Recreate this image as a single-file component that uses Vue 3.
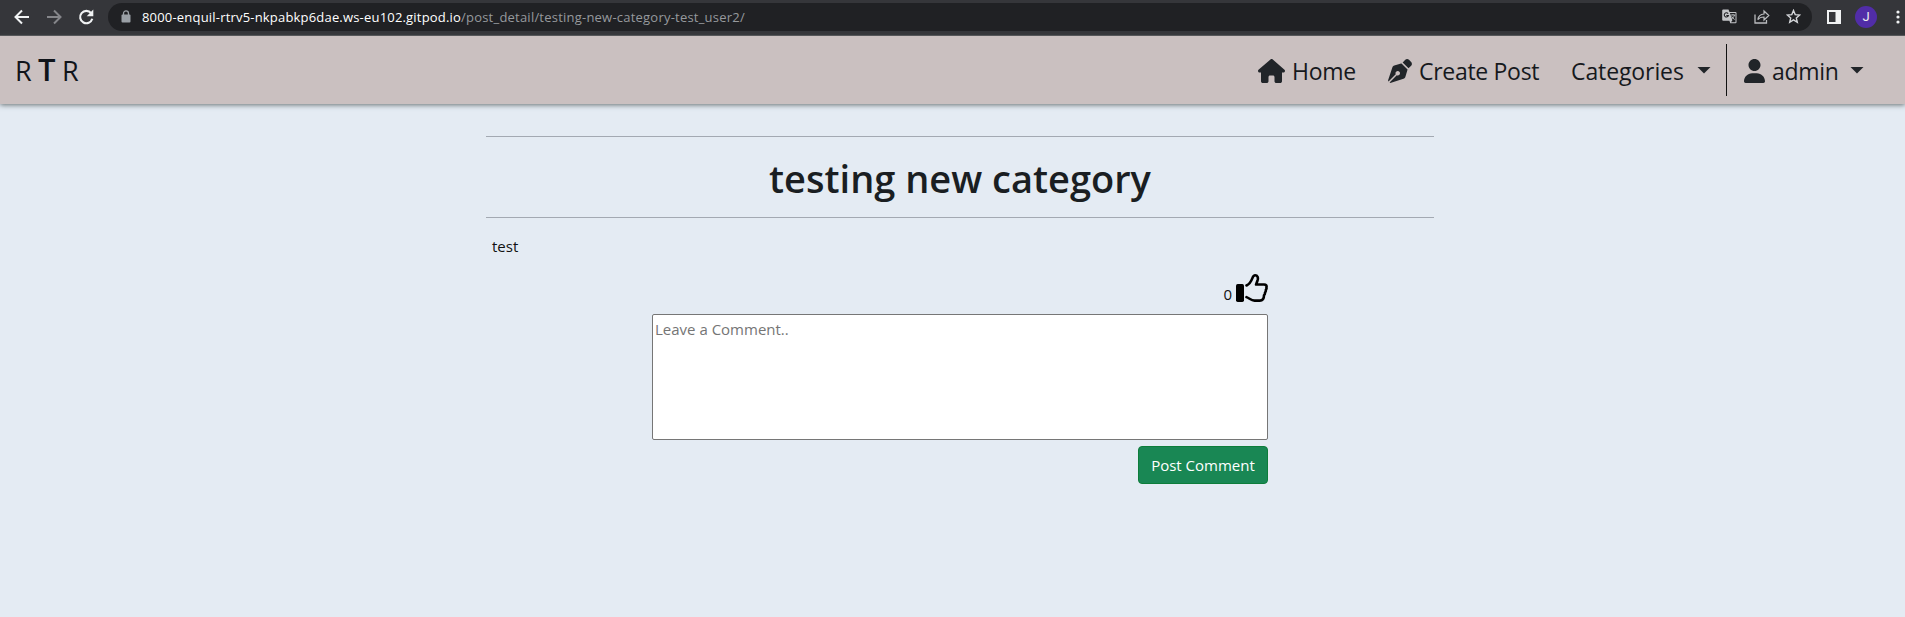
<script setup>
import { ref } from 'vue'

const comment = ref('')
const likes = ref(0)
</script>

<template>
  <div class="page">
    <div class="chrome">
      <svg class="nav-ico" viewBox="0 0 18 18"><path d="M16 9H3M9 2.5 2.5 9 9 15.5" fill="none" stroke="#f1f3f4" stroke-width="2" /></svg>
      <svg class="nav-ico fwd" viewBox="0 0 18 18"><path d="M2 9h13M9 2.5 15.5 9 9 15.5" fill="none" stroke="#85868a" stroke-width="2" /></svg>
      <svg class="nav-ico reload" viewBox="0 0 18 18"><path d="M14.2 5.2A6.2 6.2 0 1 0 15.3 10.8" fill="none" stroke="#f1f3f4" stroke-width="2.1" /><path d="M16.3 1.6v6.6H9.7z" fill="#f1f3f4" /></svg>
      <div class="omnibox">
        <svg class="lock" viewBox="0 0 10 13"><path d="M2.5 5V3.4a2.5 2.5 0 0 1 5 0V5" fill="none" stroke="#9aa0a6" stroke-width="1.3" /><rect x=".5" y="4.6" width="9" height="7.9" rx="1" fill="#9aa0a6" /></svg>
        <span class="host">8000-enquil-rtrv5-nkpabkp6dae.ws-eu102.gitpod.io</span>
        <span class="path">/post_detail/testing-new-category-test_user2/</span>
        <svg class="translate" viewBox="0 0 15 15"><path d="M1.2.5h5.3l1 2.6h6a1 1 0 0 1 1 1v9.2a1 1 0 0 1-1 1H8.3l-.9-2.6H1.2a1 1 0 0 1-1-1V1.500a1 1 0 0 1 1-1z" fill="#c3c5c8" /><path d="M7.900 4.100h5.600v9.200H9l1.400-2z" fill="#202124" /><path d="M8.700 6h4.600M11 5v1M12.500 6c-.6 2-1.700 3.300-3.200 4.300M9.600 7.300c.6 1.300 1.700 2.400 3 3.200" fill="none" stroke="#c3c5c8" stroke-width=".9" /><path d="M6.100 4.700a2.100 2.100 0 1 0 .3 1.800H4.300" fill="none" stroke="#202124" stroke-width="1.100" /></svg>
        <svg class="share" viewBox="0 0 16 15"><path d="M1 5.500v8.500h11.500V11" fill="none" stroke="#b9bbbe" stroke-width="1.300" /><path d="M3.800 10.700c.5-3.500 2.500-5.500 6.200-5.700V2l4.800 4.500L10 11V8c-2.700 0-4.700.7-6.200 2.700z" fill="none" stroke="#b9bbbe" stroke-width="1.200" /></svg>
        <svg class="star" viewBox="0 0 15 15"><path d="m7.500 1.500 1.700 4.100 4.500.4-3.400 2.900 1 4.400-3.800-2.400-3.800 2.400 1-4.400L1.300 6l4.500-.4z" fill="none" stroke="#d5d7da" stroke-width="1.400" /></svg>
      </div>
      <svg class="panel" viewBox="0 0 14 14"><path fill-rule="evenodd" d="M0 0h14v14H0zM2 2v10h6.500V2z" fill="#f1f3f4" /></svg>
      <span class="avatar">J</span>
      <svg class="dots" viewBox="0 0 4 14"><circle cx="2" cy="2" r="1.600" fill="#f1f3f4" /><circle cx="2" cy="7" r="1.600" fill="#f1f3f4" /><circle cx="2" cy="12" r="1.600" fill="#f1f3f4" /></svg>
    </div>

    <nav class="navbar">
      <a class="brand"><span class="r">R</span><span class="t">T</span><span class="r">R</span></a>
      <div class="links">
        <svg class="i-home" viewBox="0 0 576 512"><path d="M575.8 255.500c0 18-15 32.100-32 32.100h-32l.7 160.200c0 2.700-.2 5.400-.5 8.100V472c0 22.100-17.900 40-40 40H392c-22.100 0-40-17.900-40-40V384c0-17.700-14.300-32-32-32H256c-17.700 0-32 14.300-32 32v88c0 22.100-17.900 40-40 40H104c-22.100 0-40-17.900-40-40V287.600H32c-18 0-32-14-32-32.100c0-9 3-17 10-24L266.400 8c7-7 15-8 22-8s15 2 21 7L564.800 231.500c8 7 12 15 11 24z" /></svg>
        <span class="txt w-home">Home</span>
        <svg class="i-pen" viewBox="0 0 512 512"><path d="M368.400 18.300L312.700 74.100 437.900 199.300l55.700-55.700c21.900-21.900 21.900-57.300 0-79.200L447.600 18.300c-21.900-21.900-57.300-21.900-79.200 0zM288 94.600l-9.200 2.800L134.700 140.600c-19.900 6-35.700 21.200-42.300 41L3.800 445.800c-3.800 11.300-1 23.900 7.300 32.400L164.700 324.700c-3-6.300-4.700-13.300-4.700-20.700c0-26.500 21.500-48 48-48s48 21.500 48 48s-21.500 48-48 48c-7.400 0-14.400-1.700-20.700-4.700L33.700 500.900c8.600 8.300 21.100 11.200 32.400 7.300l264.300-88.600c19.700-6.600 35-22.400 41-42.300l43.200-144.100 2.700-9.200L288 94.600z" /></svg>
        <span class="txt w-create">Create Post</span>
        <span class="txt w-cat">Categories</span>
        <i class="caret"></i>
        <i class="divider"></i>
        <svg class="i-user" viewBox="0 0 448 512"><path d="M224 256c70.700 0 128-57.310 128-128s-57.300-128-128-128C153.300 0 96 57.310 96 128S153.300 256 224 256zM274.700 304H173.300C77.610 304 0 381.600 0 477.300c0 19.140 15.520 34.670 34.660 34.670h378.700C432.500 512 448 496.500 448 477.300C448 381.600 370.400 304 274.700 304z" /></svg>
        <span class="txt w-admin">admin</span>
        <i class="caret"></i>
      </div>
    </nav>

    <main class="content">
      <h1 class="title"><span>testing new category</span></h1>
      <p class="body">test</p>
      <section class="comments">
        <div class="likes">
          <span class="count">{{ likes }}</span>
          <svg class="thumb" viewBox="0 0 32 28"><rect x="0" y="10" width="8" height="18" rx="1.700" /><path d="M10.500 11.500c3.200-1.600 4.700-4.200 5.900-7.400.7-1.900 1.500-2.800 2.800-2.800 2.300 0 3.200 2.400 2.400 4.900l-1.500 4.300h8c2 0 2.900 1.300 2.300 3 .3.800 0 1.800-.6 2.400.2 1-.1 2-.8 2.700.1 1-.3 2-1 2.600 0 3-.9 5.400-4.200 5.400h-5.300c-3.300 0-4.900-2.300-8-3.500" fill="none" stroke="#000" stroke-width="2.600" stroke-linecap="round" stroke-linejoin="round" /></svg>
        </div>
        <textarea v-model="comment" class="field" placeholder="Leave a Comment.."></textarea>
        <button class="submit">Post Comment</button>
      </section>
    </main>
  </div>
</template>

<style>
html, body { background: #e4ebf3; overflow: hidden; }
</style>

<style scoped>
* { box-sizing: border-box; }
svg { display: block; flex: none; }
span { white-space: nowrap; }
.page { height: 617px; background: #e4ebf3; font-family: "Open Sans", "Noto Sans", sans-serif; color: #212529; }
.chrome { display: flex; align-items: center; height: 36px; padding: 0 0 2px 13px; background: #35363a; border-bottom: 1px solid #5b5a5d; }
.nav-ico { width: 18px; height: 18px; }
.fwd { margin-left: 14px; }
.reload { margin-left: 14px; }
.omnibox { display: flex; align-items: center; flex: none; width: 1704px; height: 28px; margin-left: 13px; padding-left: 13px; border-radius: 14px; background: #202124; font-size: 13px; line-height: 28px; }
.lock { width: 10px; height: 13px; margin-right: 11px; }
.host { width: 319px; color: #fff; letter-spacing: 0.19px; }
.path { width: 284px; color: #96999d; letter-spacing: 0.22px; }
.translate { width: 15px; height: 15px; margin-left: 977px; }
.share { width: 16px; height: 15px; margin-left: 17px; }
.star { width: 15px; height: 15px; margin-left: 16px; }
.panel { width: 14px; height: 14px; margin-left: 15px; }
.avatar { width: 22px; height: 22px; margin-left: 14px; border-radius: 50%; background: #512da8; color: #eee; font: 13px/22px Roboto, sans-serif; text-align: center; flex: none; }
.dots { width: 4px; height: 14px; margin-left: 19px; }

.navbar { display: flex; height: 68px; background: #cac0c0; box-shadow: 0 1px 5px rgba(70, 80, 80, .8); }
.brand { display: flex; align-items: baseline; padding-left: 15px; height: 67px; line-height: 66px; color: #10141a; }
.r { font-size: 27px; width: 23px; font-weight: 400; }
.t { font-size: 31px; width: 24px; font-weight: 600; }
.links { display: flex; align-items: center; margin-left: auto; padding-right: 41px; }
.txt { font-size: 23px; line-height: 34px; padding-top: 2px; font-weight: 400; color: #16191d; flex: none; }
.i-home { width: 27px; height: 24px; margin-right: 7px; margin-top: 2px; fill: #212529; }
.w-home { width: 64px; margin-right: 32px; letter-spacing: -0.3px; }
.i-pen { width: 24px; height: 24px; margin-right: 7px; margin-top: 2px; fill: #212529; }
.w-create { width: 121px; margin-right: 31px; letter-spacing: -0.3px; }
.w-cat { width: 113px; margin-right: 13px; letter-spacing: -0.1px; }
.caret { width: 14px; height: 7px; margin-top: 0; background: #212529; clip-path: polygon(0 0, 100% 0, 50% 100%); flex: none; }
.divider { width: 1px; height: 52px; margin: 0 17px 0 15px; background: #111; }
.i-user { width: 21px; height: 24px; margin-right: 7px; margin-top: 2px; fill: #212529; }
.w-admin { width: 65px; margin-right: 13px; letter-spacing: -0.3px; }

.content { width: 948px; margin: 32px 0 0 486px; }
.title { display: flex; justify-content: center; height: 82px; margin: 0; border: solid #a3a9b2; border-width: 1px 0; font-size: 38px; line-height: 83px; font-weight: 600; color: #1a1e22; }
.body { margin: 16px 0 0 6px; font-size: 15px; line-height: 24px; color: #111; }
.comments { width: 616px; margin: 16px 0 0 166px; display: flex; flex-direction: column; align-items: flex-end; }
.likes { display: flex; align-items: flex-end; height: 40px; padding-bottom: 12px; }
.count { margin-right: 4px; font-size: 15px; line-height: 20px; height: 18px; color: #111; }
.thumb { width: 32px; height: 28px; }
.field { display: block; width: 616px; height: 126px; padding: 2px; border: 1px solid #767676; border-radius: 2px; background: #fff; resize: none; font: 15px/24px "Open Sans", sans-serif; }
.field::placeholder { color: #757575; }
.submit { width: 130px; height: 38px; margin-top: 6px; padding: 0; border: 1px solid #0d7d3a; border-radius: 4px; background: #198754; color: #fff; font: 15px/24px "Open Sans", sans-serif; white-space: nowrap; }
</style>
